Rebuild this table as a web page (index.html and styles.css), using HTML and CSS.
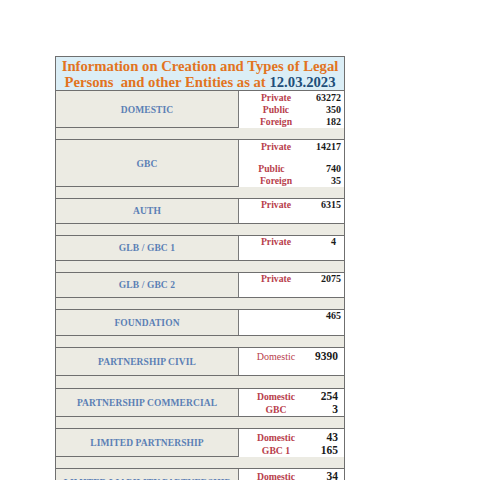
FILE: index.html
```html
<!DOCTYPE html>
<html>
<head>
<meta charset="utf-8">
<link rel="stylesheet" href="styles.css">
</head>
<body>
<div class="sheet">
  <div class="title">
    <div>Information on Creation and Types of Legal</div>
    <div>Persons&nbsp; and other Entities as at <span class="date">12.03.2023</span></div>
  </div>

  <div class="row h36">
    <div class="label">DOMESTIC</div>
    <div class="data pt1">
      <div class="line"><span class="name">Private</span><span class="num">63272</span></div>
      <div class="line"><span class="name">Public</span><span class="num">350</span></div>
      <div class="line"><span class="name">Foreign</span><span class="num">182</span></div>
    </div>
  </div>
  <div class="sep"></div>

  <div class="row h46">
    <div class="label">GBC</div>
    <div class="data pt1">
      <div class="line"><span class="name">Private</span><span class="num">14217</span></div>
      <div class="line gap"><span class="name shift">Public</span><span class="num">740</span></div>
      <div class="line"><span class="name">Foreign</span><span class="num">35</span></div>
    </div>
  </div>
  <div class="sep"></div>

  <div class="row h24">
    <div class="label">AUTH</div>
    <div class="data">
      <div class="line"><span class="name">Private</span><span class="num">6315</span></div>
    </div>
  </div>
  <div class="sep"></div>

  <div class="row h24">
    <div class="label">GLB / GBC 1</div>
    <div class="data">
      <div class="line"><span class="name">Private</span><span class="num num-mid">4</span></div>
    </div>
  </div>
  <div class="sep"></div>

  <div class="row h24">
    <div class="label">GLB / GBC 2</div>
    <div class="data">
      <div class="line"><span class="name">Private</span><span class="num">2075</span></div>
    </div>
  </div>
  <div class="sep"></div>

  <div class="row h25">
    <div class="label">FOUNDATION</div>
    <div class="data">
      <div class="line"><span class="name"></span><span class="num">465</span></div>
    </div>
  </div>
  <div class="sep"></div>

  <div class="row h27">
    <div class="label">PARTNERSHIP CIVIL</div>
    <div class="data pt2 big">
      <div class="line"><span class="name regular">Domestic</span><span class="num">9390</span></div>
    </div>
  </div>
  <div class="sep s12"></div>

  <div class="row h27">
    <div class="label">PARTNERSHIP COMMERCIAL</div>
    <div class="data pt1 big">
      <div class="line"><span class="name">Domestic</span><span class="num">254</span></div>
      <div class="line"><span class="name">GBC</span><span class="num">3</span></div>
    </div>
  </div>
  <div class="sep"></div>

  <div class="row h27">
    <div class="label">LIMITED PARTNERSHIP</div>
    <div class="data pt2 big">
      <div class="line"><span class="name">Domestic</span><span class="num">43</span></div>
      <div class="line"><span class="name">GBC 1</span><span class="num">165</span></div>
    </div>
  </div>
  <div class="sep"></div>

  <div class="row h27">
    <div class="label">LIMITED LIABILITY PARTNERSHIP</div>
    <div class="data pt1 big">
      <div class="line"><span class="name">Domestic</span><span class="num">34</span></div>
      <div class="line"><span class="name">GBC</span><span class="num">12</span></div>
    </div>
  </div>
</div>
</body>
</html>
```

FILE: styles.css
```css
html, body {
  margin: 0;
  padding: 0;
  background: #ffffff;
}

body {
  font-family: "Liberation Serif", "Times New Roman", serif;
}

.sheet {
  margin: 56px 0 0 55px;
  width: 288px;
  border: 1px solid #6f6f6f;
  border-bottom: none;
  background: #ecebe3;
}

.title {
  background: #dbeef6;
  border-bottom: 1px solid #6f6f6f;
  color: #e2741f;
  font-weight: bold;
  font-size: 14.7px;
  line-height: 16px;
  text-align: center;
  padding-top: 1px;
  box-sizing: border-box;
  height: 34px;
}

.date {
  color: #1f4e79;
}

.row {
  display: grid;
  grid-template-columns: 182px 1fr;
  border-bottom: 1px solid #6f6f6f;
}

.h24 { height: 24px; }
.h25 { height: 25px; }
.h27 { height: 27px; }
.h36 { height: 36px; }
.h46 { height: 46px; }

.sep {
  height: 11px;
  border-bottom: 1px solid #6f6f6f;
}

.s12 { height: 12px; }

.label {
  display: flex;
  align-items: center;
  justify-content: center;
  color: #5b7fb5;
  font-weight: bold;
  font-size: 9.5px;
  letter-spacing: 0.1px;
}

.data {
  background: #ffffff;
  border-left: 1px solid #7a7a7a;
  font-size: 10px;
  line-height: 12px;
}

.pt1 { padding-top: 1px; }
.pt2 { padding-top: 2px; }

.big {
  line-height: 13px;
}

.line {
  display: grid;
  grid-template-columns: 74px 1fr;
}

.gap {
  margin-top: 10px;
}

.name {
  color: #b8404b;
  font-weight: bold;
  font-size: 9.7px;
  text-align: center;
}

.shift {
  padding-right: 9px;
}

.regular {
  font-weight: normal;
  font-size: 10px;
}

.num {
  color: #1a1a1a;
  font-weight: bold;
  text-align: right;
  padding-right: 3px;
}

.num-mid {
  padding-right: 8px;
}

.big .num {
  font-size: 11.5px;
  padding-right: 6px;
}
```
